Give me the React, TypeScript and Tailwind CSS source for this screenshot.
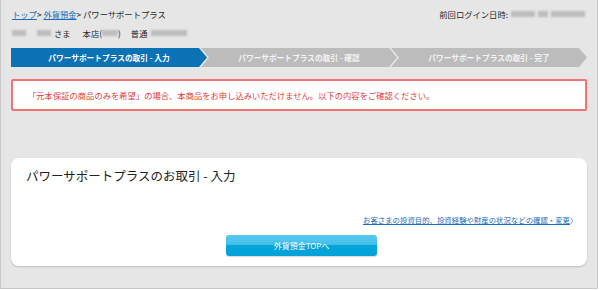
import React from "react";

const font = "[font-family:'Noto_Sans_CJK_JP','Noto_Sans',sans-serif]";

function Blur({ w }: { w: number }) {
  return <span className="inline-block h-[6px] bg-[#bdbdbd] [filter:blur(1px)] align-middle" style={{ width: w }} />;
}

function Step({ label, active, first }: { label: string; active?: boolean; first?: boolean }) {
  return (
    <div
      className={`flex-1 h-[19px] flex items-center justify-center text-[7.7px] font-bold ${
        active ? "bg-[#0b72b6] text-white" : "bg-[#bcbcbc] text-[#f4f4f4]"
      } ${
        first
          ? "[clip-path:polygon(0_0,calc(100%-8px)_0,100%_50%,calc(100%-8px)_100%,0_100%)]"
          : "-ml-[6px] [clip-path:polygon(0_0,calc(100%-8px)_0,100%_50%,calc(100%-8px)_100%,0_100%,8px_50%)]"
      }`}
    >
      {label}
    </div>
  );
}

export default function App() {
  return (
    <div className={`w-[598px] h-[289px] bg-[#e6e6e6] border-x border-b border-[#c9c9c9] text-[#2a2a2a] ${font}`}>
      <div className="px-[10px]">
        <div className="flex justify-between items-center pt-[8px] text-[8.3px] leading-[12px]">
          <div className="pl-[1px]">
            <a className="text-[#1b6db6] underline">トップ</a>
            <span>&gt; </span>
            <a className="text-[#1b6db6] underline">外貨預金</a>
            <span>&gt; パワーサポートプラス</span>
          </div>
          <div className="flex items-center gap-[3px] pr-[2px]">
            <span>前回ログイン日時:</span>
            <Blur w={24} />
            <Blur w={10} />
            <Blur w={34} />
          </div>
        </div>

        <div className="flex items-center mt-[7px] text-[8.3px] leading-[12px] pl-[1px]">
          <Blur w={14} />
          <span className="w-[11px]" />
          <Blur w={14} />
          <span className="ml-[3px]">さま</span>
          <span className="ml-[12px]">本店(</span>
          <Blur w={16} />
          <span>)</span>
          <span className="ml-[10px]">普通</span>
          <span className="ml-[4px]" />
          <Blur w={36} />
        </div>

        <div className="flex mt-[9px]">
          <Step label="パワーサポートプラスの取引 - 入力" active first />
          <Step label="パワーサポートプラスの取引 - 確認" />
          <Step label="パワーサポートプラスの取引 - 完了" />
        </div>

        <div className="mt-[12px] h-[32px] bg-white border-2 border-[#f27373] rounded-[2px] flex items-center pl-[15px] text-[8.3px] text-[#e23b3b]">
          「元本保証の商品のみを希望」の場合、本商品をお申し込みいただけません。以下の内容をご確認ください。
        </div>

        <div className="mt-[47px] bg-white rounded-[8px] shadow-[0_1px_2px_rgba(0,0,0,0.18)] pt-[10px] pb-[10px] pl-[15px] pr-[10px]">
          <h2 className="text-[12.5px] leading-[16px] font-normal text-[#222]">パワーサポートプラスのお取引 - 入力</h2>
          <div className="mt-[30px] text-right text-[7.4px] leading-[12px]">
            <a className="text-[#1b6db6] underline">お客さまの投資目的、投資経験や財産の状況などの確認・変更</a>
            <span className="text-[#1b6db6] text-[7px]">〉</span>
          </div>
          <div className="mt-[9px] flex justify-center">
            <button className="w-[151px] h-[21px] rounded-[3px] text-white text-[8px] bg-[linear-gradient(to_bottom,#58c9ee_0%,#43c0e9_45%,#06a5d9_50%,#04a2d7_100%)] shadow-[0_1px_1px_rgba(0,0,0,0.15)]">
              外貨預金TOPへ
            </button>
          </div>
        </div>
      </div>
    </div>
  );
}
